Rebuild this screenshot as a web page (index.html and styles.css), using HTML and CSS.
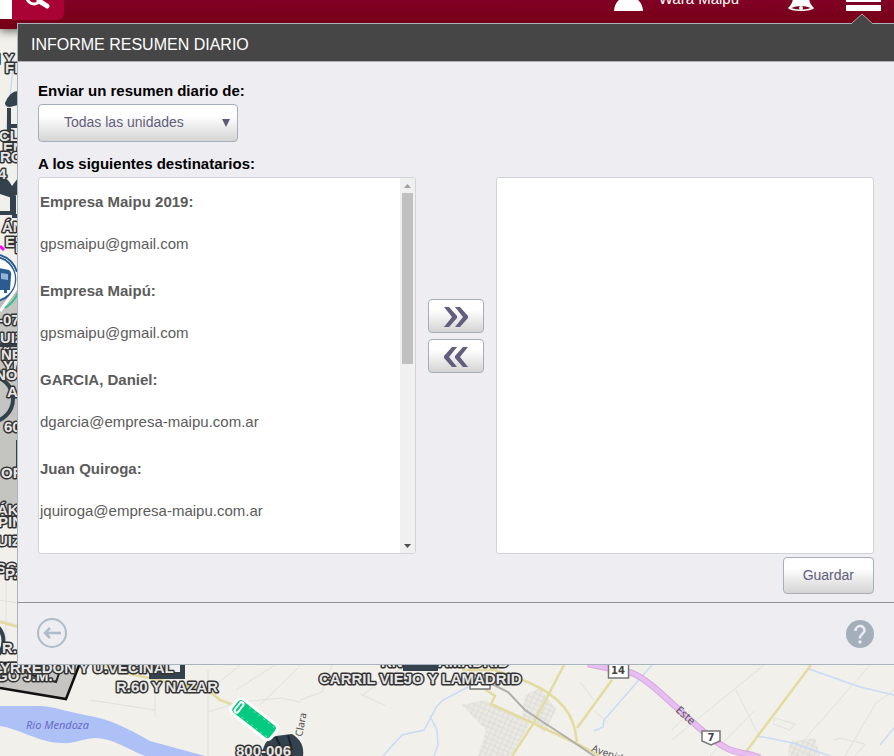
FILE: index.html
```html
<!DOCTYPE html>
<html lang="es">
<head>
<meta charset="utf-8">
<title>Informe resumen diario</title>
<link rel="stylesheet" href="styles.css">
</head>
<body>
<svg class="map" viewBox="0 0 894 756" preserveAspectRatio="xMinYMin slice" aria-hidden="true">
  <rect width="894" height="756" fill="#f1f0eb"/>
  <!-- minor roads -->
  <g fill="none" stroke="#e2e1db" stroke-width="1">
    <path d="M208 670V756M155 666V717M90 700L155 710M208 712L240 702 282 698 300 702M210 690L240 665M236 690L275 665M260 705L300 666M0 620L18 625M0 600L18 603M6 570V640M300 700L322 692 332 665M362 696L382 680 408 665M360 694L386 706M764 665L672 740M736 690L760 738M754 711L710 756M870 665L790 756M894 690L876 703 845 756M834 740L840 738 865 744 855 756M775 718L795 724 790 730 773 724ZM580 682L594 700M594 711L608 722M690 711L672 730"/>
  </g>
  <path d="M0 270H18V530L0 510Z" fill="#c4c4c0"/>
  <!-- urban grid -->
  <defs><pattern id="blocks" width="5" height="5" patternUnits="userSpaceOnUse" patternTransform="rotate(24)"><path d="M0 0H5M0 0V5" stroke="#d5d4cf" stroke-width="1" fill="none"/></pattern></defs>
  <path d="M462 705L485 700 530 724 510 756H478L486 730ZM525 695L540 688 556 709 545 732 522 716ZM790 742L815 738 820 756H788Z" fill="#e9e8e2"/>
  <path d="M462 705L485 700 530 724 510 756H478L486 730ZM525 695L540 688 556 709 545 732 522 716ZM790 742L815 738 820 756H788Z" fill="url(#blocks)"/>
  <!-- water -->
  <path d="M0 706H42C55 707 65 711 85 715C110 719 125 727 150 741L205 756H145C125 748 112 738 95 738C80 739 75 744 62 743C40 743 20 729 0 726Z" fill="#aec1f7"/>
  <g fill="none" stroke="#cadbf5" stroke-width="1.5">
    <path d="M383 756L402 735 424 730 437 706 443 700 468 687M430 716L437 730 438 745 434 756M652 665L604 720 603 727 594 731M894 695L860 687 809 669M758 736L793 743 830 756M894 728L880 745M5 140L14 60"/>
  </g>
  <!-- secondary roads -->
  <g fill="none" stroke="#e3dba0" stroke-width="2.5">
    <path d="M0 622L22 628 120 672 208 690 220 700 236 706M462 670L495 670 520 679C550 690 570 706 575 730L577 742M564 665L533 724 512 756M480 686L495 696 491 704 535 724 580 745 600 756M577 728L612 680M811 665L745 753"/>
  </g>
  <path d="M484 680L508 692 525 710 546 724 566 737 600 760" fill="none" stroke="#b1afaa" stroke-width="2"/>
  <!-- motorway -->
  <path d="M588 664L632 673C650 680 670 703 704 732S740 748 760 758" fill="none" stroke="#d5aadb" stroke-width="6.5"/>
  <path d="M588 664L632 673C650 680 670 703 704 732S740 748 760 758" fill="none" stroke="#e8bdf2" stroke-width="4.5"/>
  <g class="shield"><rect x="608.500" y="661" width="20" height="17"/><text x="618" y="674">14</text><path d="M702 731H720V741L711 745 702 741Z"/><text x="711" y="741">7</text><rect x="470" y="675" width="20" height="14"/></g>
  <text class="road" transform="translate(675 711) rotate(42)">Este</text>
  <text class="road small" transform="translate(591 751) rotate(20)">Avenida</text>
  <text class="road small" transform="translate(302 737) rotate(-79)">Clara</text>
  <text class="river" x="26" y="729">Río Mendoza</text>
  <!-- geofences and markers -->
  <path d="M0 688L66 699 80 663H0" fill="#c6c5c1" stroke="#111" stroke-width="2.5"/>
  <path d="M28 674L56 682 62 665" fill="none" stroke="#222" stroke-width="2"/>
  <g fill="none" stroke="#34424e" stroke-width="4">
    <path d="M9 108V147H18M9 126H18M0 213H12V194M14 196V216H18M0 345H18M-10 376A13 13 0 0 1-10 422M-6 624A20 20 0 0 1-6 658M18 440V468"/>
  </g>
  <path d="M18 91Q10 91 5 103Q5 107 10 107L18 105ZM0 176Q8 178 12 186L18 178V194L12 198 0 194Z" fill="#34424e"/>
  <path d="M0 255A26 26 0 0 1 18 280V294L0 311Z" fill="#b9bab9"/>
  <circle cx="-6" cy="279" r="22" fill="#fff" stroke="#2a5c91" stroke-width="2"/>
  <path d="M0 255A25 25 0 0 1 14 292L0 311" fill="none" stroke="#fff" stroke-width="3"/>
  <path d="M0 255A26 26 0 0 1 17 272" fill="none" stroke="#2a5c91" stroke-width="2"/>
  <path d="M-2 268L9 270Q12 272 11 276L10 290H7V293H4V290H0Z" fill="#2a5c91"/><path d="M1 273L8 274V280L1 279Z" fill="#91b4d8"/>
  <path d="M0 246L4 250" stroke="#f0f" stroke-width="3"/><path d="M18 293Q14 302 5 308" fill="none" stroke="#39c18b" stroke-width="2"/>
  <path d="M149 664H185V679H149Z" fill="#34424e"/><path d="M155 664H180V672H155Z" fill="#eee"/>
  <path d="M262 756Q263 739 276 736L292 734Q305 742 303 756Z" fill="#34424e"/><path d="M276 737L282 750M288 735L292 750" stroke="#18222b" stroke-width="2"/>
  <g transform="translate(240 703) rotate(38)"><rect x="-4" y="-5" width="50" height="18" rx="5" fill="#06ca80" stroke="#fff" stroke-width="3"/><rect x="0" y="-2" width="4" height="12" rx="2" fill="#06ca80" stroke="#fff" stroke-width="2"/><path d="M10-2H42M10 10H42" stroke="#65e6b0" stroke-dasharray="2 4"/></g>
  <g class="place">
    <text x="-4" y="64">I Y</text><text x="5" y="73">FI</text><text x="-1" y="141">CLA</text><text x="3" y="153">EN</text><text x="0" y="162">ROC</text><text x="-2" y="179">4</text>
    <text x="2" y="232">ÁN</text><text x="5" y="247">EK</text><text x="15" y="253">E</text>
    <text x="-2" y="325">-07</text><text x="0" y="343">UIZ</text><text x="1" y="360">ÑE</text><text x="3" y="371">YM</text><text x="-5" y="380">NO</text><text x="7" y="397">A</text><text x="4" y="432">60</text><text x="1" y="478">OF</text>
    <text x="-3" y="515">ÁKI</text><text x="-2" y="527">PIN</text><text x="-3" y="546">UIZ</text><text x="-4" y="573">SC</text><text x="5" y="579">P.</text>
    <text x="2" y="653">R.</text><text x="-4" y="681">GO J.M.</text><text x="0" y="673">YRREDON Y U.VECINAL</text><text x="116" y="692">R.60 Y NAZAR</text>
    <text x="381" y="667">RN7 Y LAMADRID</text><text x="319" y="684">CARRIL VIEJO Y LAMADRID</text><text x="236" y="756">800-006</text>
  </g>
  <path d="M403 664H438V671H403Z" fill="#34424e"/>
</svg>

<header class="topbar">
  <input class="search-box" type="search" aria-label="Buscar">
  <button class="search-btn" type="button" aria-label="Buscar">
    <svg width="28" height="20" viewBox="0 0 28 20" fill="none" stroke="#fff"><circle cx="10" cy="-3" r="7" stroke-width="3"/><path d="M15 1L23 6" stroke-width="5" stroke-linecap="round"/></svg>
  </button>
  <a class="user" href="#">
    <svg width="30" height="12" viewBox="0 0 30 12"><path d="M0 11C0 5 4-1 10-3H19C25-1 29 5 29 11Z" fill="#fff"/></svg>
    <span>Wara Maipu</span>
  </a>
  <button class="icon-btn bell" type="button" aria-label="Alertas">
    <svg width="28" height="12" viewBox="0 0 28 12"><path d="M6-3H22Q22 4 27 8C25 12 3 12 1 8Q6 4 6-3Z" fill="#fff"/><path d="M4 8Q14 4 24 8Q14 11 4 8Z" fill="#7c001c"/><circle cx="14" cy="8" r="2" fill="#fff"/></svg>
  </button>
  <button class="icon-btn" type="button" aria-label="Menú">
    <svg width="35" height="12" viewBox="0 0 35 12" fill="#fff"><path d="M0-4H35V2H0ZM0 5H35V11H0Z"/></svg>
  </button>
</header>

<main class="panel">
  <svg class="caret" width="20" height="11" viewBox="0 0 20 11"><path d="M0 11V10L10 1 20 10V11Z" fill="#464646"/><path d="M0 10L10 1 20 10" fill="none" stroke="#a9a9ab"/></svg>
  <h1 class="title">INFORME RESUMEN DIARIO</h1>
  <form class="content">
    <label class="caption" for="units">Enviar un resumen diario de:</label>
    <div class="select">
      <select id="units"><option>Todas las unidades</option></select>
      <svg width="8" height="8" viewBox="0 0 8 8"><path d="M0 0H8L4 8Z" fill="#5f5a78"/></svg>
    </div>
    <h2 class="caption">A los siguientes destinatarios:</h2>
    <div class="transfer">
      <div class="box">
        <dl class="people">
          <dt>Empresa Maipu 2019:</dt><dd>gpsmaipu@gmail.com</dd>
          <dt>Empresa Maipú:</dt><dd>gpsmaipu@gmail.com</dd>
          <dt>GARCIA, Daniel:</dt><dd>dgarcia@empresa-maipu.com.ar</dd>
          <dt>Juan Quiroga:</dt><dd>jquiroga@empresa-maipu.com.ar</dd>
        </dl>
        <div class="scrollbar">
          <svg width="7" height="4" viewBox="0 0 7 4"><path d="M0 4L3.500 0 7 4Z" fill="#a0a0a0"/></svg>
          <span class="thumb"></span>
          <svg width="7" height="4" viewBox="0 0 7 4"><path d="M0 0H7L3.500 4Z" fill="#505050"/></svg>
        </div>
      </div>
      <div class="moves">
        <button class="btn" type="button" aria-label="Agregar"><svg width="24" height="20" viewBox="0 0 24 20" fill="#625e7c"><path d="M0 0H5L13 9V11L5 20H0L8 10ZM11 0H16L24 9V11L16 20H11L19 10Z"/></svg></button>
        <button class="btn" type="button" aria-label="Quitar"><svg width="24" height="20" viewBox="0 0 24 20" fill="#625e7c"><path d="M24 0H19L11 9V11L19 20H24L16 10ZM13 0H8L0 9V11L8 20H13L5 10Z"/></svg></button>
      </div>
      <div class="box"></div>
    </div>
    <button class="btn save" type="button">Guardar</button>
  </form>
  <footer class="footer">
    <a href="#" aria-label="Volver"><svg width="30" height="30" viewBox="0 0 30 30" fill="none" stroke="#aebbc8" stroke-width="2"><circle cx="15" cy="15" r="14"/><path d="M24 15H8M13 10L8 15 13 20" stroke-width="2.500"/></svg></a>
    <a class="help" href="#" aria-label="Ayuda"><svg width="28" height="28" viewBox="0 0 28 28"><circle cx="14" cy="14" r="14" fill="#a3afbb"/><path d="M9.500 11C9.500 4.500 18.500 4.500 18.500 10.500C18.500 13.500 14 14 14 18.500" fill="none" stroke="#eeedf2" stroke-width="2.500"/><circle cx="14" cy="22" r="1.700" fill="#eeedf2"/></svg></a>
  </footer>
</main>
</body>
</html>
```
FILE: styles.css
```css
* { box-sizing: border-box; }
body {
  margin: 0;
  min-height: 100vh;
  overflow: hidden;
  font-family: "Liberation Sans", Arial, sans-serif;
  font-size: 15px;
  color: #000;
}
svg { display: block; }
button { font: inherit; cursor: pointer; }

/* map backdrop */
.map { position: absolute; inset: 0; width: 100%; height: 100%; z-index: -1; }
.place text { font-size: 15px; fill: #e6e6e6; stroke: #333; stroke-width: 3px; stroke-linejoin: round; paint-order: stroke; font-weight: bold; }
.shield rect, .shield path { fill: #fff; stroke: #777; stroke-width: 1.5px; }
.shield text { font: bold 10px "DejaVu Sans", sans-serif; text-anchor: middle; fill: #444; }
.road { font: 11px "Noto Sans", sans-serif; fill: #555; }
.road.small { font-size: 10px; }
.river { font: italic 11px "Noto Sans", sans-serif; fill: #6a6ac8; }

/* top bar */
.topbar {
  display: flex;
  align-items: flex-start;
  height: 29px;
  padding-right: 13px;
  background: linear-gradient(#800024, #740014);
  box-shadow: 0 2px 10px rgba(0, 0, 0, .6);
}
.search-box { width: 12px; height: 19px; padding: 0; border: 0; background: #fff; }
.search-btn { width: 52px; height: 20px; padding: 0 12px; border: 0; border-radius: 0 0 7px 0; background: #a90335; }
.user { display: flex; align-items: center; gap: 15px; height: 12px; margin-left: auto; color: #fff; text-decoration: none; }
.user span { line-height: 16px; margin-bottom: 14px; }
.icon-btn { padding: 0; border: 0; background: none; }
.bell { margin: 0 31px 0 48px; }

/* panel */
.panel {
  position: relative;
  margin: -6px 0 0 17px;
  border: solid #a9b3bb;
  border-width: 1px 0 1px 1px;
  background: #eeedf2;
}
.caret { position: absolute; top: -11px; right: 22px; }
.title {
  margin: 0;
  padding: 5px 13px 0;
  border-bottom: 1px solid #a9b3bb;
  background: #464646;
  color: #fff;
  font-size: 16px;
  font-weight: normal;
  line-height: 32px;
}
.content { display: flex; flex-direction: column; padding: 19px 20px 8px; }
.caption { margin: 0; font-size: 15px; font-weight: bold; line-height: 20px; }
.btn, .select select {
  border: 1px solid #a3b0bb;
  border-radius: 4px;
  background: linear-gradient(#fff 30%, #d4d4d4);
  color: #625e7c;
  font: 14px "Liberation Sans", Arial, sans-serif;
}
.select { position: relative; width: 200px; margin: 3px 0 12px; }
.select select { display: block; width: 100%; height: 38px; padding: 0 24px 2px 25px; appearance: none; }
.select svg { position: absolute; right: 8px; top: 15px; pointer-events: none; }
.transfer { display: grid; grid-template-columns: 1fr 56px 1fr; gap: 12px; margin-top: 3px; }
.box { display: flex; height: 377px; overflow: hidden; border: 1px solid #cfd3dc; border-radius: 3px; background: #fff; }
.people { flex: 1; margin: 0; padding: 14px 1px; color: #5b5b5b; line-height: 20px; overflow: hidden; }
.people dt { margin-bottom: 22px; font-weight: bold; }
.people dd { margin: 0 0 27px; }
.scrollbar { display: flex; flex-direction: column; align-items: center; width: 15px; padding: 6px 0 5px; background: #f0f0f0; }
.thumb { width: 11px; height: 171px; margin: 5px 0 auto; background: #c0c0c0; }
.moves { display: flex; flex-direction: column; gap: 6px; padding-top: 122px; }
.moves .btn { display: grid; place-items: center; height: 34px; padding: 2px 0 0; }
.save { align-self: flex-end; height: 37px; margin-top: 3px; padding: 0 19px 2px; }
.footer {
  display: flex;
  align-items: center;
  justify-content: space-between;
  height: 62px;
  padding: 0 20px 2px 19px;
  border-top: 1px solid #929292;
}
.help { padding-top: 3px; }
```
